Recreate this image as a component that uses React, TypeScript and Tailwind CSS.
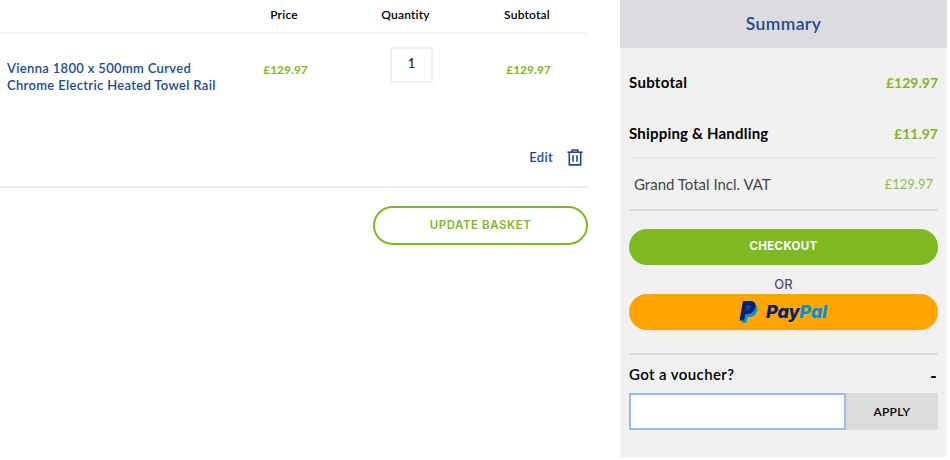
import React from "react";

const font = "font-['Lato','Noto_Sans',sans-serif]";
const btnFont = "font-['Inter','Liberation_Sans',sans-serif]";

function Trash() {
  return (
    <svg width="16" height="17" viewBox="0 0 16 17" fill="none" stroke="#1d4a8c" strokeWidth="1.6">
      <path d="M0.5 3.2H15.5" />
      <path d="M5.2 3V1H10.8V3" />
      <path d="M2.3 3.2V15.900H13.700V3.200" />
      <path d="M6 6.200V12.800M10 6.200V12.800" />
    </svg>
  );
}

function PayPalMark() {
  return (
    <svg width="19" height="22" viewBox="0 0 19 22">
      <path fill="#0a8fd8" d="M6.500 3H13.500C17.500 3 19 5.500 18.300 9C17.400 13.500 14.500 16 10 16H8.500L7.300 22H3Z" />
      <path fill="#012169" d="M4 0H11.500C15.500 0 17 2.500 16.300 6C15.400 10.500 12.500 13 8 13H6.200L5 19.500H0.500Z" />
      <path fill="#1b3fa0" d="M7.200 4L6.200 9.500H8C10.300 9.500 11.800 8.300 12.200 6.300C12.500 4.700 11.600 4 10 4Z" />
    </svg>
  );
}

export default function App() {
  return (
    <div className={`${font} flex w-[947px] h-[457px] bg-white`}>
      <div className="w-[588px] mr-[32px] shrink-0">
        <div className="grid grid-cols-[223px_122px_121px_122px] h-[34px] border-b-2 border-[#f6f6f6] text-[12px] font-semibold text-black items-center text-center pb-[3px] tracking-[0.2px]">
          <div />
          <div>Price</div>
          <div>Quantity</div>
          <div>Subtotal</div>
        </div>
        <div className="grid grid-cols-[223px_122px_121px_122px] h-[93px] items-start">
          <div className="pl-[7px] pt-[26px] text-[13px] leading-[17px] font-semibold text-[#1d4a8c] whitespace-nowrap tracking-[0.33px]">
            Vienna 1800 x 500mm Curved
            <br />
            Chrome Electric Heated Towel Rail
          </div>
          <div className="pt-[27px] pl-[3px] text-center text-[12px] font-bold text-[#7eb921] leading-[18px]">£129.97</div>
          <div className="flex justify-center pt-[13px] pl-[12px]">
            <div className="w-[43px] h-[36px] border-2 border-[#f0f0f0] flex items-center justify-center text-[13px] font-semibold text-[#333] pb-[3px]">1</div>
          </div>
          <div className="pt-[27px] pl-[3px] text-center text-[12px] font-bold text-[#7eb921] leading-[18px]">£129.97</div>
        </div>
        <div className="flex justify-end items-center h-[61px] border-b-2 border-[#eeeeee] pr-[5px] pt-[1px]">
          <span className="text-[13px] font-semibold text-[#1d4a8c] mr-[14px] tracking-[0.3px] pt-[2px]">Edit</span>
          <Trash />
        </div>
        <div className="flex justify-end mt-[18px]">
          <button className={`${btnFont} w-[215px] h-[39px] rounded-full border-2 border-[#7eb921] text-[11.500px] tracking-[0.55px] font-semibold text-[#7eb921] pt-[1px]`}>
            UPDATE BASKET
          </button>
        </div>
      </div>

      <div className="w-[327px] shrink-0 bg-[#f1f1f1]">
        <div className="h-[48px] bg-[#dcdce0] flex items-center justify-center text-[17.500px] font-semibold text-[#1d4a8c] tracking-[0.4px]">
          Summary
        </div>
        <div className="ml-[9px] mr-[9px]">
          <div className="flex justify-between items-center h-[51px] mt-[9px] text-[15px] font-bold text-black tracking-[0.3px]">
            <span>Subtotal</span>
            <span className="text-[#7eb921] text-[14px] tracking-normal">£129.97</span>
          </div>
          <div className="flex justify-between items-center h-[51px] pt-[2px] text-[15px] font-bold text-black border-b-2 border-[#e9e9e9] tracking-[0.2px]">
            <span>Shipping &amp; Handling</span>
            <span className="text-[#7eb921] text-[14px] tracking-normal">£11.97</span>
          </div>
          <div className="flex justify-between items-center h-[52px] px-[5px] text-[15px] text-[#444] border-b-2 border-[#dcdce0] pt-[1px]">
            <span>Grand Total Incl. VAT</span>
            <span className="text-[#8fc14a] text-[13px]">£129.97</span>
          </div>
          <button className={`${btnFont} mt-[18px] w-full h-[36px] rounded-full bg-[#7eb921] text-white text-[11.500px] tracking-[0.35px] font-bold block`}>
            CHECKOUT
          </button>
          <div className={`${btnFont} h-[29px] pt-[10px] flex items-center justify-center text-[13px] font-medium text-[#555]`}>OR</div>
          <button className="w-full h-[36px] rounded-full bg-[#ffa500] flex items-center justify-center gap-[8px] pb-[1px] pr-[1px]">
            <PayPalMark />
            <span className={`${btnFont} text-[18px] italic font-extrabold tracking-[-0.2px] leading-none`}>
              <span className="text-[#012169]">Pay</span>
              <span className="text-[#0a8fd8]">Pal</span>
            </span>
          </button>
          <div className="mt-[23px] border-t-2 border-[#dcdce0] h-[39px] flex justify-between items-center pt-[1px] text-[15px] font-semibold text-black tracking-[0.4px]">
            <span>Got a voucher?</span>
            <span className="font-bold text-[18px] pt-[4px] pr-[1px]">-</span>
          </div>
          <div className="flex h-[37px] mt-[1px]">
            <input className="w-[217px] h-full bg-white border-2 border-[#9dbcec] outline-none" />
            <button className="flex-1 bg-[#dcdcdc] text-[12px] font-semibold text-black tracking-[0.3px]">APPLY</button>
          </div>
        </div>
      </div>
    </div>
  );
}
